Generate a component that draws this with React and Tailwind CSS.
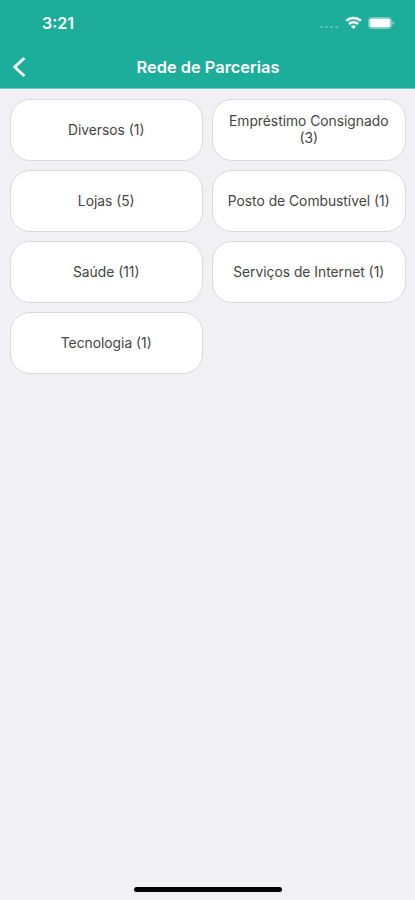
const categories = [
  { name: 'Diversos', total: 1 },
  { name: 'Empréstimo Consignado', total: 3 },
  { name: 'Lojas', total: 5 },
  { name: 'Posto de Combustível', total: 1 },
  { name: 'Saúde', total: 11 },
  { name: 'Serviços de Internet', total: 1 },
  { name: 'Tecnologia', total: 1 },
]

function StatusBar() {
  return (
    <div className="flex h-[46px] items-center justify-between pl-[42px] pr-[20px] text-white">
      <span className="text-[16px] font-semibold leading-none">3:21</span>
      <div className="flex items-center">
        <div className="mr-[7px] mt-[7px] flex gap-[2px]">
          {[0, 1, 2, 3].map(dot => (
            <span key={dot} className="h-[2px] w-[3px] rounded-full bg-white/30" />
          ))}
        </div>
        {/* Wi-Fi */}
        <svg className="mb-[1px] mr-[6px] h-[13px] w-[17px]" viewBox="0 0 17 13" fill="none" stroke="currentColor" strokeWidth="2.5">
          <path d="M1.2 4.9a10.4 10.4 0 0 1 14.6 0" />
          <path d="M4 8.1a6.4 6.4 0 0 1 9 0" />
          <path d="M8.5 12.9 6 10.4a3.6 3.6 0 0 1 5 0z" fill="currentColor" stroke="none" />
        </svg>
        {/* Bateria */}
        <svg className="h-[12px] w-[27px]" viewBox="0 0 27 12" fill="currentColor">
          <rect x="0.5" y="0.5" width="23" height="11" rx="3" fill="none" stroke="currentColor" strokeOpacity="0.4" />
          <rect x="1.5" y="1.5" width="21" height="9" rx="2" />
          <path d="M24.5 4v4c1-.4 1.6-1.1 1.6-2s-.6-1.6-1.6-2z" fillOpacity="0.5" />
        </svg>
      </div>
    </div>
  )
}

function Header() {
  return (
    <header className="h-[89px] border-b border-[#74c8bd] bg-[#1dad9b]">
      <StatusBar />
      <div className="grid h-[42px] grid-cols-[40px_1fr_40px] items-center text-white">
        <button className="pl-[12px]" aria-label="Voltar">
          <svg className="h-[20px] w-[14px]" viewBox="0 0 14 20" fill="none" stroke="currentColor" strokeWidth="2.8">
            <path d="M12.4 1 2.7 10l9.7 9" />
          </svg>
        </button>
        <h1 className="pl-[1px] text-center text-[16.4px] font-semibold leading-none">Rede de Parcerias</h1>
      </div>
    </header>
  )
}

function CategoryCard({ name, total }) {
  return (
    <button className="flex h-[62px] items-center justify-center rounded-[20px] border border-[#d9d9dd] bg-white px-[10px] pt-[1px] text-center text-[13.8px] leading-[17px] text-[#444444]">
      {name} ({total})
    </button>
  )
}

export default function App() {
  return (
    <div className="flex h-[900px] w-full flex-col bg-[#f0f0f5] font-['Inter',sans-serif]">
      <Header />
      <main className="grid grid-cols-2 gap-x-[9px] gap-y-[9.3px] px-[9.5px] pt-[9.5px]">
        {categories.map(category => (
          <CategoryCard key={category.name} name={category.name} total={category.total} />
        ))}
      </main>
      <div className="mx-auto mb-[8px] mt-auto h-[5px] w-[148px] rounded-full bg-black" />
    </div>
  )
}
